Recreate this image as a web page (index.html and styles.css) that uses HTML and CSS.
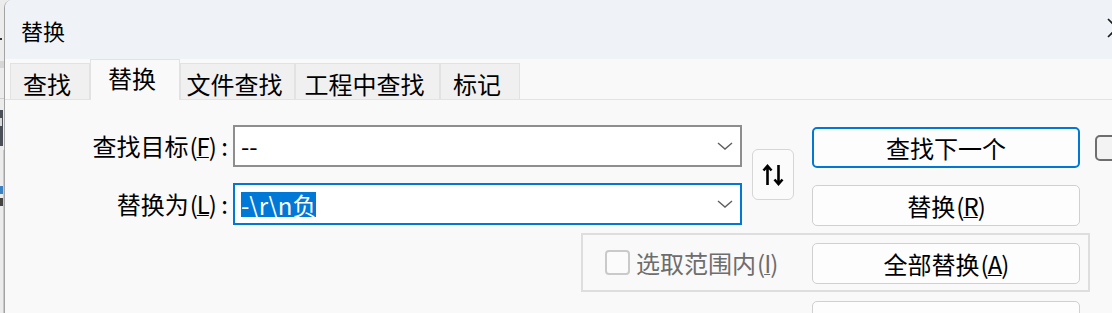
FILE: index.html
```html
<!DOCTYPE html>
<html lang="zh-CN">
<head>
<meta charset="utf-8">
<title>替换</title>
<link rel="stylesheet" href="styles.css">
</head>
<body>
<div class="screen">
  <div class="backdrop">
    <svg width="4" height="313" viewBox="0 0 4 313">
      <rect width="4" height="313" fill="#ececec"/>
      <rect y="38" width="2" height="2" fill="#333"/>
      <rect y="61" width="4" height="7" fill="#d6d6d6"/>
      <rect y="98" width="4" height="1" fill="#cfcfcf"/>
      <rect y="110" width="3" height="36" fill="#4a4f58"/>
      <rect y="118" width="2" height="8" fill="#d9d9d9"/>
      <rect y="186" width="3" height="8" fill="#3b82c4"/>
      <rect y="198" width="3" height="8" fill="#444"/>
      <rect x="3" y="150" width="1" height="163" fill="#c8c8c8"/>
    </svg>
  </div>
  <div class="window">
    <div class="titlebar">
      <span class="title">替换</span>
      <svg class="close" width="20" height="20" viewBox="0 0 20 20"><path d="M1 1L19 19M19 1L1 19" stroke="#1b1b1b" stroke-width="1.6" fill="none"/></svg>
    </div>
    <div class="tabbar">
      <div class="tab t1">查找</div>
      <div class="tab active t2">替换</div>
      <div class="tab t3">文件查找</div>
      <div class="tab t4">工程中查找</div>
      <div class="tab t5">标记</div>
    </div>
    <div class="content">
      <div class="label r1">查找目标<span class="mn">(<u>F</u>)</span>&nbsp;:</div>
      <div class="field r1">
        <span class="val">--</span>
        <svg class="chev" width="16" height="8" viewBox="0 0 16 8"><path d="M1 1L8 7L15 1" fill="none" stroke="#5f5f5f" stroke-width="1.4"/></svg>
      </div>
      <div class="swap">
        <svg width="22" height="22" viewBox="0 0 22 22"><path d="M5.5 21V2.5M1.5 6.5L5.5 2L9.5 6.5M16.5 1V19.5M12.5 15.5L16.5 20L20.5 15.5" fill="none" stroke="#000" stroke-width="2.6"/></svg>
      </div>
      <div class="btn primary r1">查找下一个</div>
      <div class="rcheck"></div>

      <div class="label r2">替换为<span class="mn">(<u>L</u>)</span>&nbsp;:</div>
      <div class="field focus r2">
        <span class="val"><span class="sel">-\r\n负</span></span>
        <svg class="chev" width="16" height="8" viewBox="0 0 16 8"><path d="M1 1L8 7L15 1" fill="none" stroke="#5f5f5f" stroke-width="1.4"/></svg>
      </div>
      <div class="btn r2">替换<span class="mn">(<u>R</u>)</span></div>

      <div class="group">
        <span class="cb"></span>
        <span class="group-label">选取范围内<span class="mn">(<u>I</u>)</span></span>
      </div>
      <div class="btn r3">全部替换<span class="mn">(<u>A</u>)</span></div>
      <div class="btn r4"></div>
    </div>
  </div>
</div>
</body>
</html>
```

FILE: styles.css
```css
* {
  box-sizing: border-box;
  margin: 0;
  padding: 0;
}

body {
  width: 1112px;
  height: 313px;
  overflow: hidden;
  background: #ececec;
  font-family: "Noto Sans CJK SC", "Noto Sans", sans-serif;
  color: #000;
}

.screen {
  display: flex;
  height: 313px;
}

.backdrop {
  flex: none;
  width: 4px;
  height: 313px;
}

.backdrop svg {
  display: block;
}

.window {
  flex: none;
  width: 1160px;
  height: 313px;
  background: #f9f9f9;
  border-left: 1px solid #a3a3a3;
  border-top-left-radius: 8px;
  overflow: hidden;
  display: flex;
  flex-direction: column;
}

.titlebar {
  flex: none;
  height: 59px;
  background: #eff3f8;
  display: flex;
  align-items: center;
  padding-left: 16px;
  padding-right: 37px;
}

.title {
  font-size: 22px;
  line-height: 1;
}

.close {
  margin-left: auto;
  margin-top: -4px;
}

.tabbar {
  flex: none;
  height: 41px;
  display: flex;
  align-items: flex-end;
  padding-left: 5px;
  border-bottom: 1px solid #e3e3e3;
}

.tab {
  height: 36px;
  border: 1px solid #e2e2e2;
  border-bottom: none;
  background: #f0f0f0;
  font-size: 24px;
  line-height: 1;
  display: flex;
  align-items: center;
  justify-content: center;
  padding-top: 5px;
  padding-right: 6px;
  white-space: nowrap;
}

.tab.active {
  height: 41px;
  margin-bottom: -1px;
  background: #f9f9f9;
  padding-top: 0;
  padding-bottom: 4px;
}

.t1 { width: 80px; }
.t2 { width: 90px; }
.t3 { width: 115px; }
.t4 { width: 145px; }
.t5 { width: 80px; }

.content {
  display: grid;
  grid-template-columns: 228px 348px 161px 10px 42px 18px 268px 10px 5px 40px;
  grid-template-rows: repeat(4, 58px);
  padding-top: 25px;
}

.r1 { grid-row: 1; }
.r2 { grid-row: 2; }
.r3 { grid-row: 3; }
.r4 { grid-row: 4; }

.label {
  grid-column: 1;
  height: 42px;
  display: flex;
  align-items: center;
  justify-content: flex-end;
  padding-right: 5px;
  font-size: 24px;
  line-height: 1;
  white-space: nowrap;
}

.mn {
  letter-spacing: -1px;
  margin-left: 1px;
}

.mn u {
  text-decoration-thickness: 1px;
  text-underline-offset: 1px;
}

.field {
  grid-column: 2 / 4;
  align-self: start;
  height: 42px;
  border: 2px solid #8e8e8e;
  background: #fff;
  display: flex;
  align-items: center;
  padding: 0 7px 0 6px;
  font-size: 24px;
  line-height: 1;
}

.field.focus {
  border-color: #0078d4;
}

.val {
  flex: 1;
  white-space: nowrap;
}

.sel {
  display: inline-block;
  background: #0078d7;
  color: #fff;
  line-height: 25px;
  height: 25px;
}

.chev {
  flex: none;
}

.swap {
  grid-column: 5;
  grid-row: 1 / 3;
  align-self: start;
  margin-top: 24px;
  height: 51px;
  border: 1px solid #d6d6d6;
  border-radius: 6px;
  background: #fbfbfb;
  display: flex;
  align-items: center;
  justify-content: center;
}

.btn {
  grid-column: 7;
  align-self: start;
  margin-top: 2px;
  height: 41px;
  border: 1px solid #d0d0d0;
  border-radius: 5px;
  background: #fdfdfd;
  font-size: 24px;
  line-height: 1;
  display: flex;
  align-items: center;
  justify-content: center;
  white-space: nowrap;
}

.btn.primary {
  border: 2px solid #0078d4;
}

.rcheck {
  grid-column: 10;
  grid-row: 1;
  align-self: start;
  margin-top: 10px;
  width: 30px;
  height: 26px;
  border: 2px solid #6e6e6e;
  border-radius: 5px;
  background: #f3f3f3;
}

.group {
  grid-column: 3 / 9;
  grid-row: 2 / 4;
  align-self: start;
  margin-top: 50px;
  height: 59px;
  border: 2px solid #dedede;
  display: flex;
  align-items: center;
  padding-left: 22px;
}

.cb {
  flex: none;
  width: 25px;
  height: 25px;
  border: 2px solid #cacaca;
  border-radius: 4px;
  background: #fbfbfb;
  margin-right: 6px;
}

.group-label {
  font-size: 24px;
  line-height: 1;
  color: #6d6d6d;
  white-space: nowrap;
}
```
